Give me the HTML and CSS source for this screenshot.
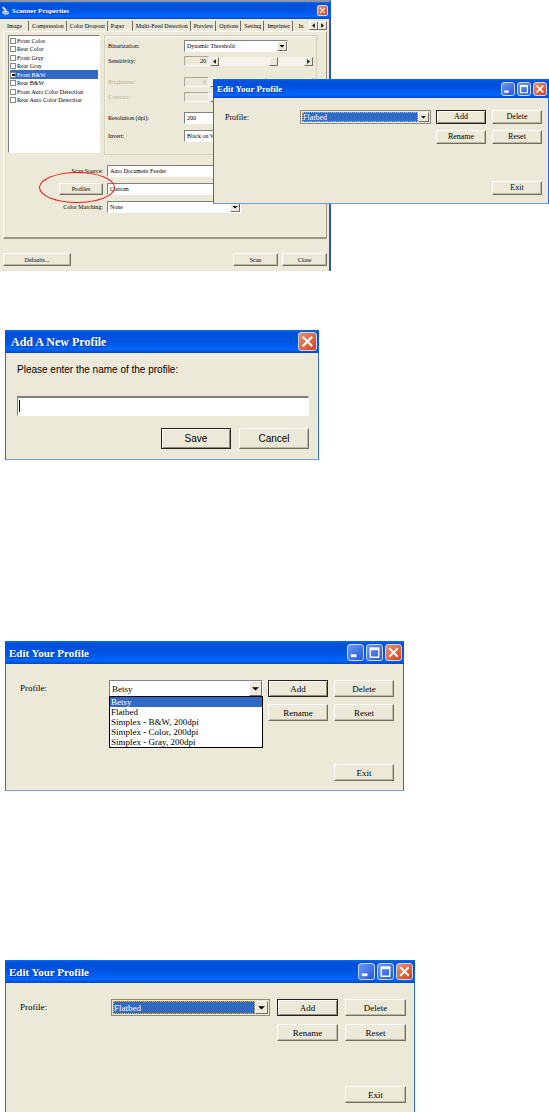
FILE: index.html
```html
<!DOCTYPE html>
<html lang="en">
<head>
    <meta charset="UTF-8">
    <meta name="viewport" content="width=device-width, initial-scale=1.0">
    <title>Scanner Profiles</title>
    <link rel="stylesheet" href="styles.css">
</head>
<body>
    <!-- Shared icons -->
    <svg class="icon-defs" width="0" height="0" aria-hidden="true">
        <symbol id="iconMin" viewBox="0 0 16 16"><path d="M3 11.5h6" stroke="#fff" stroke-width="3"/></symbol>
        <symbol id="iconMax" viewBox="0 0 16 16"><path d="M3 4h10M3.5 3v10h9V3" stroke="#fff" stroke-width="1.5" fill="none"/><path d="M3 4h10" stroke="#fff" stroke-width="3"/></symbol>
        <symbol id="iconClose" viewBox="0 0 16 16"><path d="M3.5 3.5l9 9M12.5 3.5l-9 9" stroke="#fff" stroke-width="2"/></symbol>
        <symbol id="iconDown" viewBox="0 0 8 8"><path d="M1.500 3h5L4 5.500z"/></symbol>
        <symbol id="iconLeft" viewBox="0 0 8 8"><path d="M5.500 1.500v5L2.500 4z"/></symbol>
        <symbol id="iconRight" viewBox="0 0 8 8"><path d="M2.500 1.500v5L5.500 4z"/></symbol>
    </svg>

    <div class="stage">
        <div class="window scanner">
            <div class="titlebar">
                <svg class="app-icon" viewBox="0 0 16 16" aria-hidden="true">
                    <path d="M3 1l6 6" stroke="#fff" stroke-width="3"/>
                    <path d="M2 9l5-3 7 3v4l-6 2-6-3z" fill="#dde6f5" stroke="#6b86b8"/>
                    <path d="M4 10l4 2 5-2" stroke="#44598a" fill="none"/>
                </svg>
                <h2>Scanner Properties</h2>
                <button class="win-btn close" aria-label="Close window"><svg><use href="#iconClose"/></svg></button>
            </div>
            <div class="scanner-body">
                <div class="tabs">
                    <button class="tab active">Image</button>
                    <button class="tab">Compression</button>
                    <button class="tab">Color Dropout</button>
                    <button class="tab wide">Paper</button>
                    <button class="tab">Multi-Feed Detection</button>
                    <button class="tab">Preview</button>
                    <button class="tab">Options</button>
                    <button class="tab">Setting</button>
                    <button class="tab">Imprinter</button>
                    <button class="tab last">In</button>
                    <button class="arrow" aria-label="Previous tabs"><svg><use href="#iconLeft"/></svg></button>
                    <button class="arrow" aria-label="Next tabs"><svg><use href="#iconRight"/></svg></button>
                </div>
                <div class="panel">
                    <div class="panel-top">
                        <div class="check-list">
                            <label><input type="checkbox">Front Color</label>
                            <label><input type="checkbox">Rear Color</label>
                            <label><input type="checkbox">Front Gray</label>
                            <label><input type="checkbox">Rear Gray</label>
                            <label class="selected"><input type="checkbox" checked>Front B&amp;W</label>
                            <label><input type="checkbox">Rear B&amp;W</label>
                            <label><input type="checkbox">Front Auto Color Detection</label>
                            <label><input type="checkbox">Rear Auto Color Detection</label>
                        </div>
                        <div class="group">
                            <div class="row">
                                <label for="binarization">Binarization:</label>
                                <div class="combo"><select id="binarization"><option>Dynamic Threshold</option></select><span class="arrow"><svg><use href="#iconDown"/></svg></span></div>
                            </div>
                            <div class="row">
                                <label for="sensitivity">Sensitivity:</label>
                                <output class="value">20</output>
                                <div class="slider">
                                    <button class="arrow" aria-label="Less sensitivity"><svg><use href="#iconLeft"/></svg></button>
                                    <input type="range" id="sensitivity" value="66">
                                    <button class="arrow" aria-label="More sensitivity"><svg><use href="#iconRight"/></svg></button>
                                </div>
                            </div>
                            <div class="row disabled gap-large">
                                <label for="brightness">Brightness:</label>
                                <output class="value">0</output>
                                <div class="slider">
                                    <button class="arrow" aria-label="Less brightness" disabled><svg><use href="#iconLeft"/></svg></button>
                                    <input type="range" id="brightness" disabled>
                                    <button class="arrow" aria-label="More brightness" disabled><svg><use href="#iconRight"/></svg></button>
                                </div>
                            </div>
                            <div class="row disabled">
                                <label for="contrast">Contrast:</label>
                                <output class="value"></output>
                                <div class="slider">
                                    <button class="arrow" aria-label="Less contrast" disabled><svg><use href="#iconLeft"/></svg></button>
                                    <input type="range" id="contrast" disabled>
                                    <button class="arrow" aria-label="More contrast" disabled><svg><use href="#iconRight"/></svg></button>
                                </div>
                            </div>
                            <div class="row gap-large">
                                <label for="resolution">Resolution (dpi):</label>
                                <div class="combo"><select id="resolution"><option>200</option></select><span class="arrow"><svg><use href="#iconDown"/></svg></span></div>
                            </div>
                            <div class="row gap-small">
                                <label for="invert">Invert:</label>
                                <div class="combo"><select id="invert"><option>Black on White</option></select><span class="arrow"><svg><use href="#iconDown"/></svg></span></div>
                            </div>
                        </div>
                    </div>
                    <div class="source">
                        <label for="source">Scan Source:</label>
                        <div class="combo"><select id="source"><option>Auto Document Feeder</option></select><span class="arrow"><svg><use href="#iconDown"/></svg></span></div>
                        <div class="marked">
                            <button class="btn">Profiles</button>
                            <span class="marker"></span>
                        </div>
                        <div class="combo"><select aria-label="Profiles"><option>Custom</option></select><span class="arrow"><svg><use href="#iconDown"/></svg></span></div>
                        <label for="matching">Color Matching:</label>
                        <div class="combo"><select id="matching"><option>None</option></select><span class="arrow"><svg><use href="#iconDown"/></svg></span></div>
                    </div>
                </div>
                <div class="footer">
                    <button class="btn defaults">Defaults...</button>
                    <button class="btn">Scan</button>
                    <button class="btn">Close</button>
                </div>
            </div>
        </div>

        <div class="window profile small floating">
            <div class="titlebar">
                <h2>Edit Your Profile</h2>
                <button class="win-btn" aria-label="Minimize"><svg><use href="#iconMin"/></svg></button>
                <button class="win-btn" aria-label="Maximize"><svg><use href="#iconMax"/></svg></button>
                <button class="win-btn close" aria-label="Close window"><svg><use href="#iconClose"/></svg></button>
            </div>
            <div class="profile-body">
                <label for="profile1">Profile:</label>
                <div class="combo focused"><select id="profile1"><option>Flatbed</option></select><span class="arrow"><svg><use href="#iconDown"/></svg></span></div>
                <div class="buttons">
                    <button class="btn default">Add</button>
                    <button class="btn">Delete</button>
                    <button class="btn">Rename</button>
                    <button class="btn">Reset</button>
                </div>
                <button class="btn exit">Exit</button>
            </div>
        </div>
    </div>

    <div class="window add-profile">
        <div class="titlebar">
            <h2>Add A New Profile</h2>
            <button class="win-btn close" aria-label="Close window"><svg><use href="#iconClose"/></svg></button>
        </div>
        <form class="add-body">
            <label for="profileName">Please enter the name of the profile:</label>
            <input type="text" id="profileName" autocomplete="off">
            <div class="add-buttons">
                <button type="button" class="btn default">Save</button>
                <button type="button" class="btn">Cancel</button>
            </div>
        </form>
    </div>

    <div class="window profile medium">
        <div class="titlebar">
            <h2>Edit Your Profile</h2>
            <button class="win-btn" aria-label="Minimize"><svg><use href="#iconMin"/></svg></button>
            <button class="win-btn" aria-label="Maximize"><svg><use href="#iconMax"/></svg></button>
            <button class="win-btn close" aria-label="Close window"><svg><use href="#iconClose"/></svg></button>
        </div>
        <div class="profile-body">
            <label for="profile2">Profile:</label>
            <div class="combo">
                <select id="profile2"><option>Betsy</option></select><span class="arrow"><svg><use href="#iconDown"/></svg></span>
                <ul class="options" role="listbox" aria-label="Profiles">
                    <li role="option" aria-selected="true">Betsy</li>
                    <li role="option">Flatbed</li>
                    <li role="option">Simplex - B&amp;W, 200dpi</li>
                    <li role="option">Simplex - Color, 200dpi</li>
                    <li role="option">Simplex - Gray, 200dpi</li>
                </ul>
            </div>
            <div class="buttons">
                <button class="btn default">Add</button>
                <button class="btn">Delete</button>
                <button class="btn">Rename</button>
                <button class="btn">Reset</button>
            </div>
            <button class="btn exit">Exit</button>
        </div>
    </div>

    <div class="window profile large">
        <div class="titlebar">
            <h2>Edit Your Profile</h2>
            <button class="win-btn" aria-label="Minimize"><svg><use href="#iconMin"/></svg></button>
            <button class="win-btn" aria-label="Maximize"><svg><use href="#iconMax"/></svg></button>
            <button class="win-btn close" aria-label="Close window"><svg><use href="#iconClose"/></svg></button>
        </div>
        <div class="profile-body">
            <label for="profile3">Profile:</label>
            <div class="combo focused"><select id="profile3"><option>Flatbed</option></select><span class="arrow"><svg><use href="#iconDown"/></svg></span></div>
            <div class="buttons">
                <button class="btn default">Add</button>
                <button class="btn">Delete</button>
                <button class="btn">Rename</button>
                <button class="btn">Reset</button>
            </div>
            <button class="btn exit">Exit</button>
        </div>
    </div>
</body>
</html>
```
FILE: styles.css
```css
* {
    box-sizing: border-box;
}
body {
    margin: 0;
    background-color: #fff;
    color: #000;
    font-family: "Liberation Serif", "Times New Roman", serif;
}
button, select, input {
    margin: 0;
    padding: 0;
    font: inherit;
    color: inherit;
}
.icon-defs {
    position: absolute;
}

/* Windows */
.window {
    width: 100%;
    background-color: #ece9d8;
    border: 1px solid #2a6be4;
    border-top: none;
    border-bottom-color: #6f9cf0;
}
.titlebar {
    display: flex;
    align-items: center;
    gap: 2px;
    margin: 0 -1px;
    padding: 0 2px 0 4px;
    height: 23px;
    background: linear-gradient(#0a6cf0 0%, #0050d8 12%, #0054e3 50%, #0066fb 85%, #0048c8 100%);
    color: #fff;
}
.titlebar h2 {
    flex: 1;
    margin: 0;
    font-size: 11px;
    line-height: 12px;
    text-shadow: 1px 1px #0a3a9c;
    white-space: nowrap;
}
.win-btn {
    width: 17px;
    height: 17px;
    border: 1px solid #c8d8fa;
    border-radius: 3px;
    background: linear-gradient(135deg, #6d98f5, #2458dc);
}
.win-btn.close {
    background: linear-gradient(135deg, #ee9070, #d8401c);
}
.win-btn svg, .arrow svg {
    display: block;
    width: 100%;
    height: 100%;
}

/* Controls */
.btn {
    border: 1px solid #fff;
    border-right-color: #716f64;
    border-bottom-color: #716f64;
    box-shadow: inset -1px -1px #bcb8a4;
    background-color: #ece9d8;
    text-align: center;
}
.btn.default {
    border-color: #222;
    box-shadow: inset 1px 1px #fff, inset -1px -1px #8f8c7c;
}
.arrow {
    flex: none;
    width: 9px;
    height: 9px;
    border: 1px solid #fff;
    border-right-color: #716f64;
    border-bottom-color: #716f64;
    background-color: #ece9d8;
}
.combo {
    display: flex;
    position: relative;
    border: 1px solid #fff;
    border-top-color: #808080;
    border-left-color: #808080;
    background-color: #fff;
}
.combo select {
    flex: 1;
    min-width: 0;
    padding-left: 2px;
    border: none;
    outline: none;
    appearance: none;
    background-color: #fff;
}
.combo .arrow {
    width: 10px;
    height: auto;
}
.combo.focused {
    padding: 1px;
    border-color: #8f8c7c;
    background-color: #ece9d8;
}
.combo.focused select {
    border: 1px dotted #dcb870;
    padding-left: 0;
    background-color: #316ac5;
    color: #fff;
}

/* Scanner properties */
.stage {
    position: relative;
    margin-bottom: 59px;
}
.scanner {
    max-width: 331px;
    border: none;
    border-top: 2px solid #8a94a8;
    border-right: 2px solid #2558b4;
    font-size: 6px;
    line-height: 8px;
}
.scanner .titlebar {
    height: 17px;
    margin: 0 -2px 0 0;
    padding: 0 3px 0 1px;
}
.scanner .titlebar h2 {
    font-size: 7px;
}
.scanner .win-btn {
    width: 11px;
    height: 11px;
    border-radius: 2px;
}
.app-icon {
    width: 9px;
    height: 10px;
}
.scanner-body {
    padding: 2px 2px 5px 3px;
}
.tabs {
    display: flex;
    height: 10px;
}
.tab {
    flex: none;
    padding: 0 2px 0 3px;
    border: none;
    border-right: 1px solid #716f64;
    background-color: transparent;
}
.tab.active {
    width: 26px;
    padding-left: 4px;
    text-align: left;
}
.tab.wide {
    width: 25px;
    text-align: left;
}
.tab.last {
    flex: 1;
    min-width: 0;
    padding: 0;
    border: none;
}
.panel {
    padding: 3px 9px 24px 4px;
    border: 1px solid #fff;
    border-right-color: #9a9786;
    border-bottom: 2px solid #9a9786;
}
.panel-top {
    display: flex;
    gap: 4px;
}
.check-list {
    flex: none;
    width: 92px;
    height: 118px;
    padding: 0 1px;
    border: 1px solid #fff;
    border-top-color: #808080;
    border-left-color: #808080;
    background-color: #fff;
}
.check-list label {
    display: flex;
    align-items: center;
    gap: 1px;
    height: 9px;
    white-space: nowrap;
}
.check-list label:nth-child(even) {
    height: 8px;
}
.check-list .selected {
    background-color: #316ac5;
    color: #fff;
}
.check-list input {
    appearance: none;
    width: 6px;
    height: 6px;
    border: 1px solid #8a8a80;
    background-color: #fff;
}
.check-list input:checked {
    background: #fff linear-gradient(135deg, #000, #000) center / 3px 2px no-repeat;
}
.group {
    flex: 1;
    min-width: 0;
    padding: 4px 3px 12px;
    border: 1px solid #d4d0bf;
    box-shadow: inset 1px 1px #f8f6ee;
}
.row {
    display: flex;
    align-items: center;
    height: 12px;
    margin-bottom: 3px;
}
.row:last-child {
    margin-bottom: 0;
}
.row.gap-large {
    margin-top: 9px;
}
.row.gap-small {
    margin-top: 6px;
}
.row label {
    flex: none;
    width: 76px;
}
.row .combo {
    width: 104px;
    height: 12px;
}
.row .value {
    flex: none;
    width: 25px;
    height: 10px;
    padding-right: 2px;
    border: 1px solid #fff;
    border-top-color: #aca899;
    border-left-color: #aca899;
    text-align: right;
}
.row.disabled {
    color: #b8b4a2;
}
.slider {
    display: flex;
    flex: 1;
    align-items: center;
    min-width: 0;
    margin-left: 1px;
    background-color: #f4f2e9;
}
.slider input {
    flex: 1;
    min-width: 0;
    height: 9px;
    appearance: none;
    background-color: transparent;
}
.slider input::-webkit-slider-thumb {
    appearance: none;
    width: 9px;
    height: 9px;
    border: 1px solid #fff;
    border-right-color: #716f64;
    border-bottom-color: #716f64;
    background-color: #ece9d8;
}
.source {
    display: grid;
    grid-template-columns: 95px 134px;
    gap: 6px 4px;
    margin-top: 10px;
}
.source > label {
    align-self: center;
    text-align: right;
}
.source .combo {
    height: 12px;
}
.marked {
    position: relative;
    justify-self: end;
    width: 44px;
}
.marked .btn {
    width: 100%;
    height: 12px;
}
.marker {
    position: absolute;
    z-index: 1;
    inset: -11px -12px -8px -20px;
    border: 1px solid #f01010;
    border-radius: 50%;
    pointer-events: none;
}
.footer {
    display: flex;
    gap: 4px;
    margin-top: 14px;
}
.footer .btn {
    width: 45px;
    height: 13px;
}
.footer .defaults {
    width: 68px;
    margin-right: auto;
}

/* Edit your profile */
.profile {
    font-size: 9px;
    line-height: 10px;
}
.profile-body {
    display: grid;
    grid-template-columns: 89px 1fr auto;
    align-items: start;
    padding: 16px 9px 9px 14px;
}
.profile-body label {
    padding-top: 3px;
}
.buttons {
    display: grid;
    grid-template-columns: 60px 60px;
    gap: 7px 6px;
    margin-left: 5px;
}
.profile .btn {
    height: 17px;
}
.exit {
    grid-column: 3;
    justify-self: end;
    width: 60px;
    margin-top: 43px;
}
.profile .combo {
    height: 17px;
}
.profile .combo .arrow {
    width: 13px;
}
.options {
    position: absolute;
    top: 15px;
    left: -1px;
    right: -1px;
    margin: 0;
    padding: 0;
    border: 1px solid #000;
    background-color: #fff;
    list-style: none;
}
.options li {
    padding-left: 1px;
    line-height: 10px;
    white-space: nowrap;
}
.options li[aria-selected="true"] {
    background-color: #316ac5;
    color: #fff;
}
.medium {
    max-width: 399px;
    margin: 0 0 169px 5px;
}
.large {
    max-width: 410px;
    margin: 0 0 0 5px;
}
.large .profile-body {
    grid-template-columns: 91px 1fr auto;
    padding-right: 8px;
}
.large .buttons {
    grid-template-columns: 61px 61px;
    gap: 8px 7px;
    margin-left: 7px;
}
.large .exit {
    width: 61px;
    margin-top: 45px;
}
.small {
    max-width: 336px;
    font-size: 8px;
}
.small .titlebar {
    height: 19px;
}
.small .titlebar h2 {
    font-size: 9px;
}
.small .win-btn {
    width: 14px;
    height: 14px;
}
.small .profile-body {
    grid-template-columns: 75px 1fr auto;
    padding: 12px 6px 8px 11px;
}
.small .buttons {
    grid-template-columns: 50px 50px;
    gap: 6px;
}
.small .btn, .small .combo {
    height: 14px;
}
.small .combo .arrow {
    width: 11px;
}
.small .exit {
    width: 50px;
    margin-top: 37px;
}
.floating {
    position: absolute;
    z-index: 2;
    top: 79px;
    left: 213px;
}

/* Add a new profile */
.add-profile {
    max-width: 314px;
    margin: 0 0 181px 5px;
    font-family: "Liberation Sans", Arial, sans-serif;
    font-size: 10px;
    line-height: 12px;
}
.add-profile .titlebar h2 {
    padding-left: 2px;
    font-family: "Liberation Serif", "Times New Roman", serif;
    font-size: 12px;
}
.add-profile .win-btn {
    width: 19px;
    height: 19px;
}
.add-body {
    display: flex;
    flex-direction: column;
    padding: 11px 9px 10px 11px;
}
/* the gradient is the text cursor */
.add-body input {
    height: 20px;
    margin: 20px 0 12px;
    padding: 0 2px;
    border: 1px solid #fff;
    border-top: 2px solid #808080;
    border-left-color: #808080;
    background: #fff linear-gradient(#000, #000) 1px 2px / 1px 12px no-repeat;
    outline: none;
}
.add-buttons {
    display: flex;
    justify-content: flex-end;
    gap: 8px;
}
.add-buttons .btn {
    width: 70px;
    height: 21px;
}
```
